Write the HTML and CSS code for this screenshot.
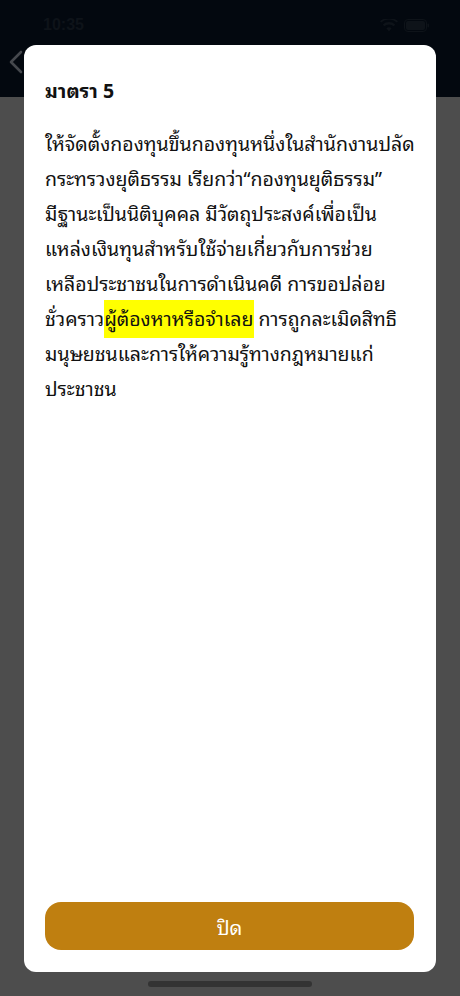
FILE: index.html
```html
<!DOCTYPE html>
<html lang="th">
<head>
<meta charset="utf-8">
<title>มาตรา 5</title>
<link rel="stylesheet" href="styles.css">
</head>
<body>
<div class="screen">
  <header class="topbar">
    <div class="status">
      <span class="time">10:35</span>
      <span class="status-icons">
        <svg width="18" height="13" viewBox="0 0 18 13"><path d="M9 12.5l2.6-3.2a4 4 0 0 0-5.2 0zM4.3 7.2a7 7 0 0 1 9.4 0l1.5-1.8a9.4 9.4 0 0 0-12.4 0zM1.1 3.6a11.8 11.8 0 0 1 15.8 0l1.1-1.4A13.6 13.6 0 0 0 0 2.2z" fill="#0e1319"/></svg>
        <svg width="26" height="13" viewBox="0 0 26 13"><rect x="0.5" y="0.5" width="22" height="12" rx="3.5" fill="none" stroke="#0e1319"/><rect x="2" y="2" width="19" height="9" rx="2" fill="#0e1319"/><rect x="23.5" y="4.5" width="1.5" height="4" rx="0.7" fill="#0e1319"/></svg>
      </span>
    </div>
    <div class="navrow">
      <svg class="back" width="14" height="24" viewBox="0 0 14 24"><path d="M12 2L2 12l10 10" fill="none" stroke="#45484d" stroke-width="2.6" stroke-linecap="round" stroke-linejoin="round"/></svg>
    </div>
  </header>
  <main class="page"></main>
  <div class="home-indicator"></div>

  <section class="modal">
    <h1 class="modal-title">มาตรา 5</h1>
    <div class="modal-body">
      <p class="law-text">
        <span class="line">ให้จัดตั้งกองทุนขึ้นกองทุนหนึ่งในสำนักงานปลัด</span>
        <span class="line">กระทรวงยุติธรรม เรียกว่า“กองทุนยุติธรรม”</span>
        <span class="line">มีฐานะเป็นนิติบุคคล มีวัตถุประสงค์เพื่อเป็น</span>
        <span class="line">แหล่งเงินทุนสำหรับใช้จ่ายเกี่ยวกับการช่วย</span>
        <span class="line">เหลือประชาชนในการดำเนินคดี การขอปล่อย</span>
        <span class="line">ชั่วคราว<mark class="hl">ผู้ต้องหาหรือจำเลย</mark> การถูกละเมิดสิทธิ</span>
        <span class="line">มนุษยชนและการให้ความรู้ทางกฎหมายแก่</span>
        <span class="line">ประชาชน</span>
      </p>
    </div>
    <button class="close-btn" type="button">ปิด</button>
  </section>
</div>
</body>
</html>
```

FILE: styles.css
```css
html, body {
  margin: 0;
  padding: 0;
}
body {
  width: 460px;
  height: 996px;
  overflow: hidden;
  background: #4d4d4d;
  font-family: "Noto Sans", "Noto Sans Thai Looped", sans-serif;
  color: #111111;
}
.screen {
  position: relative;
  width: 460px;
  height: 996px;
  display: flex;
  flex-direction: column;
}
.topbar {
  height: 97px;
  background: #03080f;
  display: flex;
  flex-direction: column;
}
.status {
  height: 50px;
  display: flex;
  align-items: center;
  justify-content: space-between;
  padding: 0 30px 0 43px;
  box-sizing: border-box;
}
.time {
  font-family: "Liberation Sans", sans-serif;
  font-weight: 700;
  font-size: 16px;
  color: #0e1319;
}
.status-icons {
  display: flex;
  gap: 6px;
  align-items: center;
}
.navrow {
  flex: 1;
  display: flex;
  align-items: center;
  padding-left: 9px;
  margin-top: -24px;
}
.page {
  flex: 1;
  background: #4d4d4d;
}
.home-indicator {
  position: absolute;
  left: 148px;
  top: 981px;
  width: 164px;
  height: 6px;
  border-radius: 3px;
  background: #333333;
}
.modal {
  position: absolute;
  left: 24px;
  top: 45px;
  width: 412px;
  height: 927px;
  box-sizing: border-box;
  background: #ffffff;
  border-radius: 12px;
  padding: 32px 22px 22px 21px;
  display: flex;
  flex-direction: column;
}
.modal-title {
  margin: 0;
  font-size: 19.5px;
  font-weight: 700;
  line-height: 28px;
}
.modal-body {
  flex: 1;
  padding-top: 21px;
}
.law-text {
  margin: 0;
  font-size: 19.5px;
  line-height: 35px;
}
.line {
  display: block;
  white-space: nowrap;
}
.hl {
  background: #ffff00;
  color: #111111;
  padding: 5px 0 6px;
}
.close-btn {
  height: 48px;
  width: 100%;
  border: none;
  border-radius: 16px;
  background: #bf7f10;
  color: #ffffff;
  font-family: inherit;
  font-size: 20px;
  padding: 0;
}
```
